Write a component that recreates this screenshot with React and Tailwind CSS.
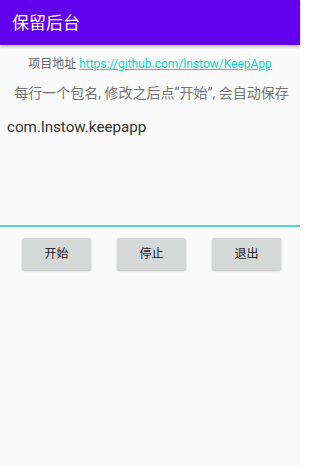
import React from 'react';

const font = { fontFamily: 'Roboto, "Noto Sans CJK SC", sans-serif' };

export default function App() {
  return (
    <div className="w-[300px] h-[466px] bg-[#fafafa] flex flex-col" style={font}>
      <div className="h-[45px] bg-[#6200ee] flex items-center px-3 shadow-[0_2px_3px_rgba(0,0,0,0.25)] z-10">
        <span className="text-white text-[17px] leading-none pt-[1px]">保留后台</span>
      </div>

      <div className="mt-[11px] text-center text-[12px] leading-[16px] text-[#666]">
        项目地址 <span className="text-[#03dac5] underline">https://github.com/lnstow/KeepApp</span>
      </div>
      <div className="mt-[12px] pl-[3px] text-center text-[14px] leading-[18px] text-[#757575]">
        每行一个包名, 修改之后点“开始”, 会自动保存
      </div>

      <div className="mt-[14px] h-[111px] border-b-2 border-[#4fd8cb] px-[7px] text-[15.2px] leading-[22px] text-[#333]">
        com.lnstow.keepapp
      </div>

      <div className="flex gap-[26px] pl-[22px] pt-[11px]">
        {['开始', '停止', '退出'].map(t => (
          <button key={t} className="w-[69px] h-[32px] rounded-[2px] bg-[#d6d7d7] text-[12px] text-[#222] shadow-[0_1px_2px_rgba(0,0,0,0.25)]">
            {t}
          </button>
        ))}
      </div>
    </div>
  );
}
